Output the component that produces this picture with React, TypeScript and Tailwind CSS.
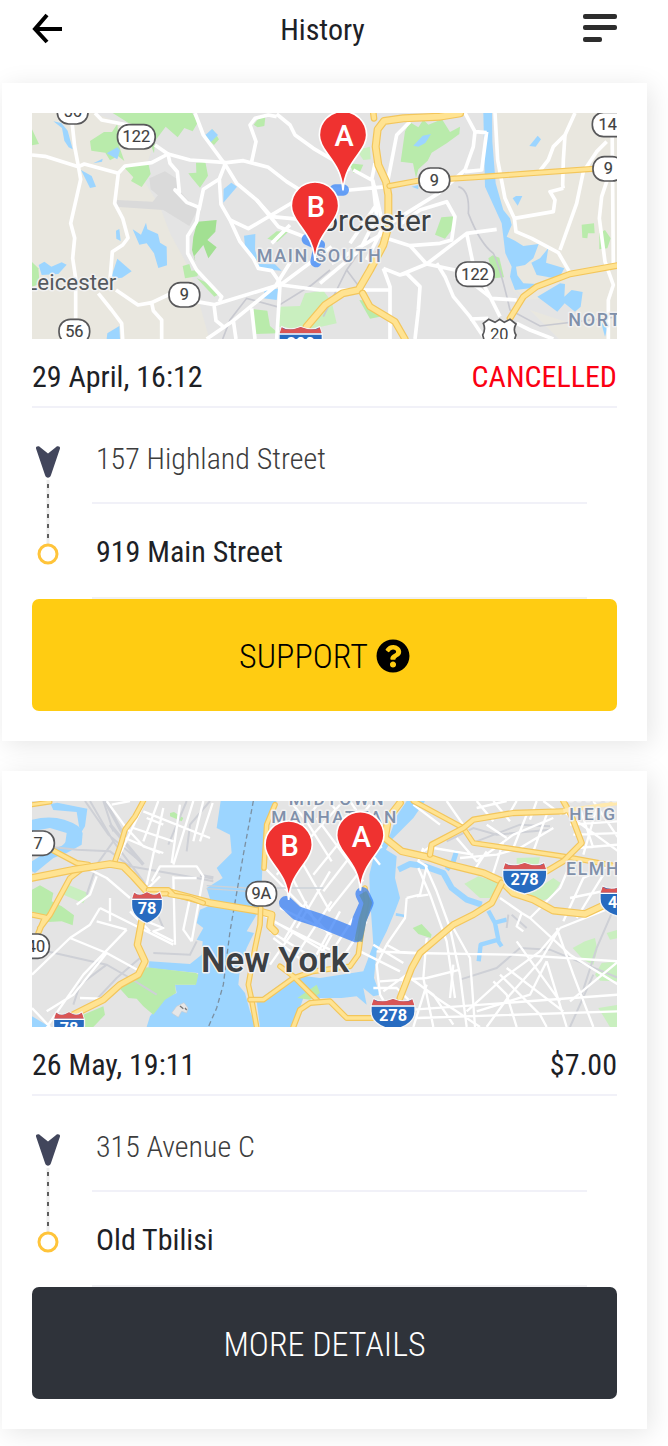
import type { ReactNode } from "react";

const mapFont = "font-['Roboto','Noto_Sans',sans-serif]";

function Pin({ x, y, label }: { x: number; y: number; label: string }) {
  return (
    <g transform={`translate(${x} ${y})`}>
      <path
        d="M0 6C-4 -46 -22 -70 -46 -103C-62 -124 -71 -140 -71 -160A71 71 0 0 1 71 -160C71 -140 62 -124 46 -103C22 -70 4 -46 0 6Z"
        fill="#ef3230"
        stroke="#fff"
        strokeWidth="5"
      />
      <text x="3" y="-126" fontSize="87" fontWeight="500" fill="#fff" textAnchor="middle">
        {label}
      </text>
    </g>
  );
}

function RouteBadge({ x, y, w, label }: { x: number; y: number; w: number; label: string }) {
  return (
    <g>
      <rect x={x - w / 2} y={y - 36} width={w} height="73" rx="34" fill="#fff" stroke="#58585a" strokeWidth="5" />
      <text x={x} y={y + 17} fontSize="49" fill="#3f3f41" stroke="#3f3f41" strokeWidth="0.5" textAnchor="middle">
        {label}
      </text>
    </g>
  );
}

function Interstate({ x, y, w, label }: { x: number; y: number; w: number; label: string }) {
  const h = w / 2;
  return (
    <g transform={`translate(${x} ${y})`}>
      <path
        d={`M${-h} 24L${-h + 8} 0Q${-h / 2} 14 0 0Q${h / 2} 14 ${h - 8} 0L${h} 24V38C${h} 66 ${h - 22} 84 0 94C${-h + 22} 84 ${-h} 66 ${-h} 38Z`}
        fill="#276bc0"
        stroke="#f4f4f4"
        strokeWidth="4"
      />
      <path
        d={`M${-h + 2} 20L${-h + 8} 2L${-h + 18} 8L${-h / 3} 8L0 1L${h / 3} 8L${h - 18} 8L${h - 8} 2L${h - 2} 20Z`}
        fill="#d95555"
      />
      <path d={`M${-h + 1} 22H${h - 1}`} stroke="#fff" strokeWidth="4" />
      <text y="67" fontSize="49" fontWeight="700" fill="#fff" textAnchor="middle">
        {label}
      </text>
    </g>
  );
}

function Place({
  x,
  y,
  size,
  color = "#3c4043",
  weight = 500,
  spacing = 0,
  children,
}: {
  x: number;
  y: number;
  size: number;
  color?: string;
  weight?: number;
  spacing?: number;
  children: ReactNode;
}) {
  return (
    <text
      x={x}
      y={y}
      fontSize={size}
      fontWeight={weight}
      letterSpacing={spacing}
      fill={color}
      stroke="#f1f1f1"
      strokeWidth="9"
      strokeLinejoin="round"
      paintOrder="stroke"
    >
      {children}
    </text>
  );
}

function Highway({ d, width = 18 }: { d: string; width?: number }) {
  return (
    <g fill="none" strokeLinejoin="round" strokeLinecap="round">
      <path d={d} stroke="#f3c65b" strokeWidth={width} />
      <path d={d} stroke="#ffe392" strokeWidth={width - 7} />
    </g>
  );
}

function MapFrame({ title, children }: { title: string; children: ReactNode }) {
  return (
    <svg viewBox="6 9 1755 678" role="img" aria-label={title} className={`block h-auto w-full overflow-hidden ${mapFont}`}>
      {children}
    </svg>
  );
}

function WorcesterMap() {
  return (
    <MapFrame title="Route map, Worcester">
      <rect x="6" y="9" width="1755" height="678" fill="#e4e4e4" />
      <g fill="#e9e7df">
        <path d="M6 9H190L290 45L370 110L335 200L390 290L420 370L480 480L538 687H6Z" />
        <path d="M1395 9H1765V690H1590L1500 600L1450 540L1440 470L1425 330L1400 240Z" />
      </g>
      <path d="M1440 520L1490 570L1600 560L1640 610L1620 640L1500 600Z" fill="#e4e4e4" />
      <path
        d="M358 205L405 184L440 206L446 240L482 280L502 300L478 348L400 300L256 290L260 270L368 275L384 256L362 238Z"
        fill="#dadada"
      />
      <g fill="#b9ebab">
        <path d="M6 58L27 102L6 106Z" />
        <path d="M248 9H487L503 38L488 64L463 54L443 82L407 50L375 93L372 130L345 60L297 40Z" />
        <path d="M180 93L222 66H246L262 42L268 110L283 153L264 138L240 151L226 128L184 122Z" />
        <path d="M284 174L310 168L355 160L362 192L335 231L303 213L310 202Z" />
        <path d="M475 190L499 188L498 158L526 155L534 197L510 233L485 203Z" />
        <path d="M671 44L690 20L706 22L703 48L683 52Z" />
        <path d="M525 80L548 58L567 88L552 105Z" />
        <path d="M712 386L740 364L775 365L742 395Z" />
        <path d="M458 468L478 462L484 482L507 480L502 499L465 505Z" />
        <path d="M6 456L25 475L29 522L6 530Z" />
        <path d="M500 504L530 518L568 552L553 560Z" />
        <path d="M668 597L712 602L720 648L745 670L675 672Z" />
        <path d="M1112 155L1125 64L1140 37L1165 52L1180 29L1195 44L1236 28L1260 66L1290 50L1288 72L1250 100L1205 128L1193 152L1165 178L1158 205L1149 160Z" />
        <path d="M1215 374L1234 322L1272 319L1267 358L1245 386Z" />
        <path d="M1375 445L1388 436L1408 443L1422 502L1392 505Z" />
        <path d="M1655 344L1692 340L1694 370L1674 370L1672 385L1657 383Z" />
        <path d="M1708 370L1725 360L1742 385L1732 415L1708 418Z" />
        <path d="M958 160L1000 164L988 190L970 188Z" />
        <path d="M988 570L1010 572L1050 620L1020 626Z" />
      </g>
      <g fill="#c9efbf">
        <path d="M748 590L810 588L825 550L880 542L905 575L920 640L830 660L745 650Z" />
        <path d="M980 120L1020 110L1022 148L1000 150Z" />
      </g>
      <path d="M502 335L560 330L556 365L532 390L560 412L535 445L520 405L493 438L496 455L486 420L490 380Z" fill="#a2e092" />
      <g fill="#9cd5ff">
        <path d="M70 34L94 39L113 62L128 118L116 112L103 92L96 54Z" />
        <path d="M230 130L262 112L270 121L262 148Z" />
        <path d="M190 160L218 146L216 155Z" />
        <path d="M153 180L185 198L198 230L180 234Z" />
        <path d="M526 75L546 57L564 75L542 97Z" />
        <path d="M580 278L581 237L604 218L621 230Z" />
        <path d="M258 362L268 357L272 393L259 386Z" />
        <path d="M308 358L333 374L348 338L352 358L384 372L390 398L410 410L411 466L385 474L372 430L350 400L328 404Z" />
        <path d="M26 465L43 455L64 470L95 457L110 464L85 492L35 495Z" />
        <path d="M262 446L305 484L276 503L242 507Z" />
        <path d="M642 377L676 372L675 420L690 466L645 410Z" />
        <path d="M684 462L735 463L755 482L690 477Z" />
        <path d="M704 540L745 536L740 570L700 565Z" />
        <path d="M232 670L268 648L270 687H230Z" />
        <path d="M1360 9H1386L1387 95L1397 220L1420 300L1440 325L1445 345L1430 380L1455 392L1480 408L1526 402L1510 445L1485 465L1458 470L1462 496L1480 520L1520 522L1500 535L1455 540L1440 500L1445 470L1426 430L1415 340L1365 230Z" />
        <path d="M1504 458L1530 445L1555 414L1548 458L1603 475L1585 508L1550 500L1520 495Z" />
        <path d="M1522 560L1590 520L1605 522L1603 560L1625 540L1658 546L1652 590L1635 605L1604 580L1582 605Z" />
        <path d="M1150 107L1178 77L1203 72L1186 99L1165 110Z" />
        <path d="M1498 108L1523 77L1533 88L1517 110Z" />
        <path d="M1448 265L1458 258L1477 258L1463 287Z" />
        <path d="M1145 230L1165 225V238Z" />
        <path d="M1710 625L1732 655L1725 680Z" />
      </g>
      <g fill="none" stroke="#c8c9d0" strokeWidth="5">
        <path d="M900 480L845 525L740 590L650 565L600 630L578 687M1285 230Q1320 240 1315 310Q1350 400 1390 430Q1410 470 1440 600L1530 648L1765 620M1020 380L950 480L880 620M950 480L1010 560" />
      </g>
      <g fill="none" stroke="#fff" strokeWidth="11" strokeLinejoin="round">
        <path d="M126 36L134 110L145 168L152 208L122 340L134 384L128 445L137 505L137 625" />
        <path d="M6 135L45 139L145 170L163 162L265 190L285 168L365 158L414 132L480 150L590 158L640 152L715 172L770 215L905 300" />
        <path d="M195 9L215 30L310 48M375 105L414 132L420 160L442 185L448 246L435 240L470 277L507 292L500 335L473 378V430L500 480L575 560L568 575" />
        <path d="M495 9L520 75L585 163L620 220L680 270L725 320L780 325L905 337M585 163L568 207L520 238L507 300M568 207L573 283L600 330L630 395L670 445L685 475L725 482L755 525L870 540L1080 540" />
        <path d="M740 20L715 15L675 25L660 45L678 95L665 155M740 12L780 45L795 75L850 115L960 180M680 270L745 350L835 385M600 330L655 356L800 270M725 400L780 345" />
        <path d="M265 190L254 280L278 325L294 384L278 405L247 425L240 510M258 540L324 585L365 578L420 552M205 550L245 600L275 640L278 687M365 578L370 602L395 630V687" />
        <path d="M500 575L552 584L680 545L755 522L905 410M530 687L610 632L735 530L785 450M552 584L558 632L580 650M610 632L618 687M665 595L675 687M750 525L745 610L740 687" />
        <path d="M1305 9L1335 65L1330 110L1305 180L1225 250L1080 340M1370 65L1355 180L1305 185M1335 65L1370 68" />
        <path d="M1395 9L1403 150L1425 265L1453 325L1570 305L1575 270L1560 245L1600 235M1635 9L1605 75L1570 110L1555 150L1530 182" />
        <path d="M1605 75L1600 150L1598 225L1600 235M1453 325L1458 365L1505 385L1585 428L1618 485M1730 95L1700 125L1660 185L1640 280L1590 420M1735 200L1715 260L1708 325L1725 455L1750 525L1735 570V687M1746 9L1750 470" />
        <path d="M1100 350L1170 300L1250 275L1275 320L1265 390L1230 400L1140 407L1060 382M1140 407L1190 462L1310 370L1400 358M1310 370L1330 465L1380 560L1410 620M1190 462L1275 480M1220 460L1245 500L1270 560L1320 620L1365 687" />
        <path d="M1060 475L1110 495L1130 490L1170 530L1165 600L1155 687M1060 475L1080 530V687M1110 495L1190 462M1275 500L1340 530L1385 565L1460 570M1320 627L1375 625M1460 640L1500 660L1570 687" />
        <path d="M870 235L960 240L1070 230M970 180L1025 210L1035 160M1028 210L1040 320L990 420L870 520M1070 230L1100 75L1140 35M1028 210L1060 350L1010 450M905 460L1060 370M1035 290L960 400" />
      </g>
      <Highway d="M1030 9L1032 25" width={20} />
      <Highway d="M1290 10L1230 20L1120 25L1062 33L1043 58L1037 110L1045 165L1068 215L1075 255V350L1060 405L1020 480L985 540L938 550L885 585L830 650" width={24} />
      <Highway d="M1078 228L1165 212L1335 202L1500 190L1695 176" />
      <Highway d="M998 550L1020 590L1095 635L1125 687" width={22} />
      <Highway d="M1765 466L1620 492L1520 530L1480 560L1440 625" width={20} />
      <Interstate x={812} y={650} w={130} label="290" />
      <g fill="none" stroke="#4c91f7" strokeWidth="34" strokeLinecap="round" strokeLinejoin="round" opacity=".85">
        <path d="M940 240H915M832 388L868 405L858 455" />
      </g>
      <Place x={-14} y={540} size={67} color="#55595e" weight={400}>Leicester</Place>
      <Place x={873} y={362} size={90} weight={400}>orcester</Place>
      <Place x={680} y={456} size={54} color="#8090aa" spacing={5}>MAIN SOUTH</Place>
      <Place x={1615} y={649} size={54} color="#8090aa" spacing={5}>NORTH</Place>
      <RouteBadge x={128} y={5} w={92} label="56" />
      <RouteBadge x={319} y={80} w={113} label="122" />
      <RouteBadge x={463} y={554} w={92} label="9" />
      <RouteBadge x={133} y={664} w={92} label="56" />
      <RouteBadge x={1213} y={210} w={92} label="9" />
      <RouteBadge x={1335} y={492} w={115} label="122" />
      <RouteBadge x={1747} y={43} w={120} label="140" />
      <RouteBadge x={1735} y={176} w={92} label="9" />
      <path
        d="M1360 640L1376 628L1395 637L1409 628L1423 637L1440 628L1458 642Q1448 660 1458 675L1450 700H1365L1358 675Q1368 658 1360 640Z"
        fill="#fff"
        stroke="#58585a"
        strokeWidth="5"
      />
      <text x="1408" y="691" fontSize="49" fill="#3f3f41" textAnchor="middle">20</text>
      <Pin x={939} y={235} label="A" />
      <Pin x={855} y={447} label="B" />
    </MapFrame>
  );
}

function NewYorkMap() {
  return (
    <MapFrame title="Route map, New York">
      <rect x="6" y="9" width="1755" height="678" fill="#e4e4e4" />
      <g fill="#9cd5ff">
        <path d="M572 9H740L715 55L700 140L692 330L650 400L672 405L650 450L630 510L625 560L645 585L660 640L680 687H350L360 655L405 600L440 585L435 560L495 560L505 525L355 510L358 490L480 498L515 470L518 430L500 425L520 390L500 375L510 335L545 320L530 270L578 240L560 210L605 165L600 110L560 90Z" />
        <path d="M680 610L790 530L870 540L1000 520L1030 440L1020 300L1018 230L1035 160L1080 110L1100 55L1130 9H1185L1150 60L1085 125L1068 155L1100 175L1095 240L1110 300L1095 340L1070 400L1040 460L1032 540L1050 590L1030 595L1000 570L1010 620L980 595L935 600L820 600L790 687H690Z" />
        <path d="M1098 345L1125 350V358L1097 353Z" />
        <path d="M6 687V655L60 687Z" />
        <path d="M6 65Q85 45 145 85L158 105L155 140L110 165L70 180L15 225L6 220V190L60 155L105 140L110 105L60 90L6 100Z" />
        <path d="M62 18L82 14L172 32L165 85L128 145L95 145L148 90L140 42L70 36Z" />
      </g>
      <g fill="none" stroke="#9cd5ff" strokeLinejoin="round">
        <path d="M1105 215L1140 198L1185 205L1240 225L1265 270L1310 305L1355 320" strokeWidth="18" />
        <path d="M1250 215L1270 190L1280 158" strokeWidth="15" />
        <path d="M1375 338L1395 375L1405 425L1352 440L1346 490M1390 375L1430 365M1405 430L1415 445" strokeWidth="13" />
      </g>
      <g fill="#b9ebab">
        <path d="M6 275L30 262L70 285L65 310L95 325L132 352L128 382L95 370L55 372L6 340Z" />
        <path d="M270 572L310 545L350 508L498 525L505 530L498 560L435 560L438 585L405 605L370 650L340 625L320 602L295 600Z" />
        <path d="M160 650L220 625L225 650L190 687H150Z" />
        <path d="M420 45L432 42L460 60L455 70L420 55Z" />
        <path d="M802 600L860 560L870 585L840 605Z" />
        <path d="M1148 390L1175 378L1205 410L1202 420L1165 408Z" />
      </g>
      <g fill="#c9efbf">
        <path d="M88 285L118 262L174 285L160 316Z" />
        <path d="M1303 257L1345 235L1410 255L1380 300L1350 300Z" />
        <path d="M1460 180L1530 178L1525 200H1460Z" />
        <path d="M1525 270L1570 240L1592 255L1560 300L1530 310L1495 285Z" />
        <path d="M1628 450L1665 430L1695 420L1702 455L1690 500L1660 485Z" />
        <path d="M1695 530L1715 495L1765 490V550L1710 548Z" />
        <path d="M1730 405L1765 395V420L1740 425Z" />
        <path d="M1705 630L1765 620V687H1740Z" />
      </g>
      <path d="M440 625L462 614L474 630L470 645L455 640L445 658L425 645Z" fill="#e6e6e6" stroke="#c7ccd2" strokeWidth="2" />
      <path d="M450 624L460 632M465 630L470 636" stroke="#777" strokeWidth="4" />
      <g fill="none" stroke="#ced0d6" strokeWidth="6">
        <path d="M180 9L250 130L200 200L170 290M6 140L140 155L240 160L300 205L500 240L550 250M165 9L235 110L330 190M220 9L250 100M415 140L470 9M6 450L230 500L300 540L380 590M230 500L150 560L130 620M540 9L480 80L470 160M250 130L340 250L400 390M370 465L480 470L500 430M180 625L260 540L330 480" />
        <path d="M1290 545L1400 510L1470 450L1560 455L1765 540M1655 590L1700 450L1765 300M1435 350L1430 390M1445 350L1490 390M1250 130L1330 90L1400 110L1560 95M1620 687L1690 530M1340 130L1470 80L1560 85" />
      </g>
      <path d="M240 80L340 200M225 9L280 110M510 232L550 240" fill="none" stroke="#ced0d6" strokeWidth="10" />
      <g fill="none" stroke="#fff" strokeWidth="7" strokeLinejoin="round">
        <path d="M230 9L285 85L340 145L400 165M245 20L300 9M345 9L260 190M385 9L340 130M400 30L350 260M450 20L425 195M490 9L430 200M520 9L490 130M548 15L510 130M285 120L390 165M310 90L430 130M340 40L540 120M350 60L400 80M365 250L390 205H500L520 235L485 430M430 235L435 440M390 235L355 270M430 240H500M480 300L460 395L485 430" />
        <path d="M160 205L230 240L300 300M200 235L180 290L140 320M210 330L330 390L430 440M210 330L180 380L120 420L6 530M120 420L230 465L330 520M290 395L160 530L50 687M200 370L290 395M230 465L130 590L50 640M240 300V370M350 370L400 390L370 400L430 430M300 340L360 400M150 600L215 602M6 630L60 687" />
        <path d="M780 9L830 70L905 190M740 60L900 340M730 130L860 380M705 210L900 410M700 350L900 470M720 400L850 480M860 60L1000 250M905 20L1050 200M960 9L1055 150M745 170L810 90L870 9M740 230L930 20M850 230L1020 20M880 280L1050 60M895 340L1030 170M800 390L900 220M760 430L830 310M800 470L905 310M720 500L790 400M860 470L930 340M900 470L970 360M930 490L1010 370M730 370L900 455M730 420L820 490M850 510L905 410M750 330L905 405" />
        <path d="M1030 440L1120 495M990 460L1110 520M1040 460L1140 465L1450 470L1765 490M1070 440L1110 462L1160 465M1070 440L1040 500L1050 590L1080 640M1130 300L1170 290L1190 205L1165 190L1180 150M1130 300L1125 360L1070 440M1165 210L1200 290L1250 430L1275 600M1185 200L1220 280L1260 390L1290 530L1310 687M1270 390L1320 480L1335 687M1160 295L1195 290" />
        <path d="M1190 420L1180 540L1210 687M1140 540L1210 590L1270 680M1050 550L1190 540L1290 515M1060 580L1130 530L1220 600L1350 687M1030 570H1100L1150 620M1150 635L1765 590M1160 660L1765 640M1120 550L1080 687M1190 560L1150 687M1270 500L1260 600" />
        <path d="M1590 390L1530 460L1420 540L1310 640M1590 390L1530 490L1440 590L1370 687M1460 430L1590 610M1550 490L1610 687M1580 390L1630 530L1690 687M1430 510L1600 640M1410 530L1530 650L1550 687M1390 550L1430 590L1460 687M1550 490L1500 590L1340 640M1765 490L1620 610" />
        <path d="M1410 300L1475 345L1500 360L1590 270L1620 200M1475 345L1460 385L1480 400M1500 360L1620 470L1765 560M1590 390L1765 320M1600 370L1660 240L1765 190M1620 300L1765 270M1640 360L1720 230M1280 120L1340 190L1450 110L1570 60M1290 180L1400 170L1470 150L1570 90M1370 160L1330 220M1420 130L1385 240M1490 50L1450 150M1550 50L1510 160M1260 110L1180 160M1210 150L1330 170" />
        <path d="M1150 20L1230 80M1250 9L1320 110M1340 9L1390 70M1390 9L1440 70M1460 9L1430 60M1520 9L1500 65M1340 30L1430 9M1370 80L1430 120M1600 40L1765 160M1650 30L1690 150M1700 30L1660 170M1620 80L1765 70M1630 110L1765 105M1640 150L1765 140M1690 9L1765 120M1540 9L1595 50" />
      </g>
      <path d="M530 263L650 270H880M530 272L650 280" fill="none" stroke="#cbd2d9" strokeWidth="4" />
      <path d="M670 9L640 170L600 400L580 560L560 630L535 687" fill="none" stroke="#7c91a3" strokeWidth="4" strokeDasharray="15 10" />
      <Highway d="M340 9L315 55L285 95L272 140L255 190" width={17} />
      <Highway d="M6 20L60 12" width={15} />
      <Highway d="M65 155L140 195L175 200M165 205L120 240L60 350L30 390M6 350L45 358L25 405" width={18} />
      <Highway d="M6 240L130 215L240 198L280 205L310 235L355 285L420 283L540 315L690 340L725 350L720 385L735 400" width={23} />
      <Highway d="M420 290L480 300L520 315M355 275H415L430 290" width={16} />
      <Highway d="M335 370L322 440L345 490L325 530L270 560L220 605L170 630L130 650" width={22} />
      <Highway d="M735 20L710 80L702 210M692 330L690 380L675 450L655 560L665 605L680 687" width={17} />
      <Highway d="M750 505L790 535L865 610M660 605H700L790 540L850 520L920 510L960 505L985 470L1000 360L1010 310L1005 270" width={17} />
      <Highway d="M790 687L810 635L840 615L900 610L950 660H1030" width={18} />
      <Highway d="M1110 15L1075 60L1065 120L1115 160L1195 178L1260 200L1360 225L1415 250L1450 285L1510 305L1570 338L1665 348L1725 320" width={23} />
      <Highway d="M1150 9L1300 90L1330 135L1600 175L1765 205" width={17} />
      <Highway d="M1200 170L1205 140L1300 90L1330 65L1450 45L1600 40M1600 9L1625 55L1655 135L1600 190L1550 220" width={19} />
      <Highway d="M1415 255L1385 315L1330 350L1270 380L1170 465L1145 510L1110 600" width={21} />
      <path d="M1600 38L1765 15" fill="none" stroke="#ffe9ae" strokeWidth="12" />
      <path d="M768 315L800 345L870 368L978 412L988 365L1010 315L997 288" fill="none" stroke="#3a80f5" strokeWidth="42" strokeLinecap="round" strokeLinejoin="round" opacity=".75" />
      <path d="M998 285L1014 315L998 365L985 430" fill="none" stroke="#5d8fa8" strokeWidth="24" strokeLinejoin="round" opacity=".75" />
      <Place x={776} y={20} size={52} color="#8090aa" spacing={7}>MIDTOWN</Place>
      <Place x={724} y={74} size={52} color="#8090aa" spacing={7}>MANHATTAN</Place>
      <Place x={1608} y={10} size={52} color="#8090aa" spacing={7}>JACKSON</Place>
      <Place x={1618} y={65} size={52} color="#8090aa" spacing={7}>HEIGHTS</Place>
      <Place x={1608} y={232} size={53} color="#8090aa" spacing={5}>ELMHURST</Place>
      <Place x={513} y={522} size={104} weight={600}>New York</Place>
      <RouteBadge x={24} y={135} w={98} label="7" />
      <RouteBadge x={694} y={287} w={91} label="9A" />
      <RouteBadge x={4} y={444} w={108} label="440" />
      <Interstate x={351} y={282} w={93} label="78" />
      <Interstate x={117} y={642} w={93} label="78" />
      <Interstate x={1484} y={194} w={132} label="278" />
      <Interstate x={1089} y={602} w={132} label="278" />
      <Interstate x={1776} y={264} w={132} label="495" />
      <Pin x={776} y={300} label="B" />
      <Pin x={991} y={272} label="A" />
    </MapFrame>
  );
}

function RouteRail() {
  return (
    <svg viewBox="0 0 32 190" aria-hidden="true" className="h-[190px] w-8 shrink-0">
      <path
        d="M4 40.500C3.500 38 7 37.500 8.500 39.500L16 45.500L23.500 39.500C25 37.500 28.500 38 28 40.500L19 67C18 70.500 14 70.500 13 67Z"
        fill="#42465c"
      />
      <path d="M16 72V136" stroke="#ececec" strokeWidth="3" />
      <path d="M16 76V136" stroke="#5e5e5e" strokeWidth="2" strokeDasharray="4 6" />
      <circle cx="16" cy="146" r="9" fill="#fff" stroke="#ffc43a" strokeWidth="3" />
    </svg>
  );
}

interface TripProps {
  map: ReactNode;
  date: string;
  status: string;
  cancelled?: boolean;
  from: string;
  to: string;
  action: ReactNode;
}

function Trip({ map, date, status, cancelled, from, to, action }: TripProps) {
  return (
    <article className="bg-white p-[30px] shadow-[4px_4px_24px_rgba(0,0,0,0.1)]">
      {map}
      <div className="flex items-center justify-between border-b-2 border-[#f1f1f8] pt-4 pb-[7px] text-[30px] leading-[44px]">
        <h2>{date}</h2>
        <span className={cancelled ? "text-[#fb0012]" : ""}>{status}</span>
      </div>
      <div className="flex">
        <RouteRail />
        <ul className="mr-[30px] ml-7 flex-1 text-[30px]">
          <li className="flex h-24 items-center border-b-2 border-[#f1f1f8] pt-1.5 pl-1 font-light text-[#3d3d3d]">{from}</li>
          <li className="flex h-[95px] items-center border-b-2 border-[#f1f1f4] pt-0.5 pl-1">{to}</li>
        </ul>
      </div>
      {action}
    </article>
  );
}

const buttonBase = "flex h-28 w-full items-center justify-center gap-2 rounded-[7px] pt-0.5 text-[34px] font-light";

export default function App() {
  return (
    <div className="min-h-screen overflow-hidden bg-white pb-4 font-['Roboto_Condensed','Liberation_Sans_Narrow',Roboto,sans-serif] text-[#1d2126]">
      <header className="flex h-[83px] items-start justify-between pt-3 pr-[51px] pl-8">
        <button type="button" aria-label="Back" className="flex h-8 w-8 items-center">
          <svg viewBox="0 0 32 32" className="size-8" fill="none" stroke="#000" strokeWidth="4">
            <path d="M15 3L3 17L15 30M3 17H30" />
          </svg>
        </button>
        <h1 className="text-[30px] leading-9">History</h1>
        <button type="button" aria-label="Menu" className="flex h-8 w-9 items-center justify-end">
          <svg viewBox="0 0 36 32" className="h-8 w-9" fill="#2d2d2d">
            <rect x="2" y="2" width="34" height="5" rx="2" />
            <rect x="2" y="13" width="34" height="5" rx="2" />
            <rect x="2" y="25" width="19" height="5" rx="2" />
          </svg>
        </button>
      </header>
      <main className="mr-[21px] ml-0.5 flex flex-col gap-[30px]">
        <Trip
          map={<WorcesterMap />}
          date="29 April, 16:12"
          status="CANCELLED"
          cancelled
          from="157 Highland Street"
          to="919 Main Street"
          action={
            <button type="button" className={`${buttonBase} bg-[#ffcc12] text-black`}>
              SUPPORT
              <svg viewBox="0 0 512 512" aria-hidden="true" className="size-[34px]" fill="currentColor">
                <path d="M504 256c0 136.997-111.043 248-248 248S8 392.997 8 256C8 119.083 119.043 8 256 8s248 111.083 248 248zM262.655 90c-54.497 0-89.255 22.957-116.549 63.758-3.536 5.286-2.353 12.415 2.715 16.258l34.699 26.310c5.205 3.947 12.621 3.008 16.665-2.122 17.864-22.658 30.113-35.797 57.303-35.797 20.429 0 45.698 13.148 45.698 32.958 0 14.976-12.363 22.667-32.534 33.976C247.128 238.528 216 254.941 216 296v4c0 6.627 5.373 12 12 12h56c6.627 0 12-5.373 12-12v-1.333c0-28.462 83.186-29.647 83.186-106.667 0-58.002-60.165-102-116.531-102zM256 338c-25.365 0-46 20.635-46 46 0 25.364 20.635 46 46 46s46-20.636 46-46c0-25.365-20.635-46-46-46z" />
              </svg>
            </button>
          }
        />
        <Trip
          map={<NewYorkMap />}
          date="26 May, 19:11"
          status="$7.00"
          from="315 Avenue C"
          to="Old Tbilisi"
          action={
            <button type="button" className={`${buttonBase} bg-[#2f333a] text-white`}>
              MORE DETAILS
            </button>
          }
        />
      </main>
    </div>
  );
}
